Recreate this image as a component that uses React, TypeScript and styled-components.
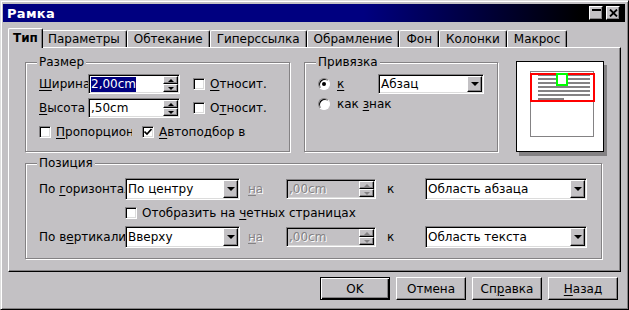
import React from 'react';
import styled, { createGlobalStyle, css } from 'styled-components';

const BG = '#c3c1c4';
const DARK = '#848284';

const Global = createGlobalStyle`
  html, body { margin: 0; padding: 0; background: #fff; }
  body { font-family: "DejaVu Sans", "Liberation Sans", sans-serif; font-size: 12px; color: #000; }
  * { box-sizing: border-box; }
  u { text-underline-offset: 2px; }
`;

const raised = css`
  border: 1px solid;
  border-color: #fff #000 #000 #fff;
  box-shadow: inset -1px -1px ${DARK};
  background: ${BG};
`;

const sunken = css`
  border: 1px solid;
  border-color: ${DARK} #fff #fff ${DARK};
  box-shadow: inset 1px 1px #000, inset -1px -1px #dcdcdc;
`;

const Window = styled.div`
  width: 629px;
  height: 310px;
  background: ${BG};
  border: 1px solid;
  border-color: #dedede #000 #000 #dedede;
  box-shadow: inset 1px 1px #fff, inset -1px -1px ${DARK};
  padding: 3px 3px 3px 2px;
  display: flex;
  flex-direction: column;
`;

const TitleBar = styled.div`
  height: 18px;
  flex: none;
  background: linear-gradient(to right, #000080 0%, #000080 58%, #000 93%);
  display: flex;
  align-items: center;
  padding: 0 5px 0 4px;
`;

const Title = styled.div`
  flex: 1;
  color: #fff;
  font-weight: bold;
  font-size: 13px;
  letter-spacing: 0.3px;
`;

const TitleBtn = styled.div`
  width: 14px;
  height: 14px;
  ${raised};
  display: flex;
  align-items: center;
  justify-content: center;
  & + & { margin-left: 3px; }
`;

const TabBar = styled.div`
  margin: 6px 0 0 5px;
  height: 19px;
  padding-left: 2px;
  display: flex;
  align-items: flex-end;
  flex: none;
`;

const Tab = styled.div<{ $active?: boolean }>`
  height: 17px;
  padding: 0 6px 0 6px;
  display: flex;
  align-items: center;
  white-space: nowrap;
  border-top: 1px solid #fff;
  border-left: 1px solid #fff;
  border-right: 1px solid #000;
  box-shadow: inset -1px 0 ${DARK};
  border-radius: 2px 2px 0 0;
  background: ${BG};
  ${(p) =>
    p.$active &&
    css`
      height: 20px;
      margin: 0 -2px -1px;
      padding: 0 4px 1px 4px;
      font-weight: bold;
      position: relative;
      z-index: 1;
    `}
`;

const Panel = styled.div`
  margin: 0 4px 0 5px;
  height: 225px;
  flex: none;
  border: 1px solid;
  border-color: #fff #000 #000 #fff;
  box-shadow: inset -1px -1px ${DARK};
  padding: 13px 0 0 16px;
`;

const TopRow = styled.div`
  display: flex;
  align-items: flex-start;
  height: 91px;
`;

const Group = styled.div<{ $w: number; $h: number; $ml?: number; $mt?: number; $pt: number }>`
  position: relative;
  width: ${(p) => p.$w}px;
  height: ${(p) => p.$h}px;
  margin-left: ${(p) => p.$ml ?? 0}px;
  margin-top: ${(p) => p.$mt ?? 0}px;
  border: 1px solid ${DARK};
  box-shadow: inset 1px 1px #fff, 1px 1px #fff;
  padding: ${(p) => p.$pt}px 0 0 13px;
  display: flex;
  flex-direction: column;
`;

const Caption = styled.span`
  position: absolute;
  top: -8px;
  left: 11px;
  padding: 0 2px;
  line-height: 14px;
  background: ${BG};
`;

const Row = styled.div<{ $h?: number; $gap?: number; $pl?: number }>`
  display: flex;
  align-items: center;
  height: ${(p) => p.$h ?? 20}px;
  margin-bottom: ${(p) => p.$gap ?? 0}px;
  padding-left: ${(p) => p.$pl ?? 0}px;
`;

const Label = styled.div<{ $w: number; $ml?: number; $disabled?: boolean }>`
  width: ${(p) => p.$w}px;
  margin-left: ${(p) => p.$ml ?? 0}px;
  flex: none;
  white-space: nowrap;
  overflow: hidden;
  ${(p) =>
    p.$disabled &&
    css`
      color: ${DARK};
      text-shadow: 1px 1px #fff;
    `}
`;

const Field = styled.div<{ $w: number; $h?: number; $disabled?: boolean }>`
  width: ${(p) => p.$w}px;
  height: ${(p) => p.$h ?? 20}px;
  flex: none;
  ${sunken};
  background: ${(p) => (p.$disabled ? BG : '#fff')};
  display: flex;
  align-items: stretch;
  padding: 1px 1px 1px 1px;
`;

const FieldText = styled.div<{ $disabled?: boolean }>`
  flex: 1;
  display: flex;
  align-items: center;
  padding-left: 1px;
  white-space: nowrap;
  overflow: hidden;
  ${(p) =>
    p.$disabled &&
    css`
      color: ${DARK};
      text-shadow: 1px 1px #fff;
    `}
`;

const Selected = styled.span`
  background: #000080;
  color: #fff;
  line-height: 15px;
`;

const SpinCol = styled.div`
  width: 15px;
  display: flex;
  flex-direction: column;
  justify-content: center;
`;

const SpinBtn = styled.div`
  height: 8px;
  ${raised};
  display: flex;
  align-items: center;
  justify-content: center;
`;

const ArrowUp = styled.div<{ $disabled?: boolean }>`
  width: 0;
  height: 0;
  border-left: 3px solid transparent;
  border-right: 3px solid transparent;
  border-bottom: 3px solid ${(p) => (p.$disabled ? DARK : '#000')};
`;

const ArrowDown = styled.div<{ $disabled?: boolean; $big?: boolean }>`
  width: 0;
  height: 0;
  border-left: ${(p) => (p.$big ? 4 : 3)}px solid transparent;
  border-right: ${(p) => (p.$big ? 4 : 3)}px solid transparent;
  border-top: ${(p) => (p.$big ? 4 : 3)}px solid ${(p) => (p.$disabled ? DARK : '#000')};
`;

const DropBtn = styled.div`
  width: 15px;
  ${raised};
  display: flex;
  align-items: center;
  justify-content: center;
`;

const CheckItem = styled.div<{ $w?: number; $ml?: number }>`
  display: flex;
  align-items: center;
  gap: 5px;
  ${(p) => p.$w && css`width: ${p.$w}px;`}
  margin-left: ${(p) => p.$ml ?? 0}px;
  flex: none;
  white-space: nowrap;
  overflow: hidden;
`;

const Box = styled.div`
  width: 12px;
  height: 12px;
  flex: none;
  ${sunken};
  background: #fff;
  display: flex;
  align-items: center;
  justify-content: center;
`;

const RadioItem = styled.div<{ $w?: number }>`
  display: flex;
  align-items: center;
  gap: 7px;
  ${(p) => p.$w && css`width: ${p.$w}px;`}
  flex: none;
  white-space: nowrap;
`;

const Radio = styled.div`
  width: 12px;
  height: 12px;
  flex: none;
  border-radius: 50%;
  border: 1px solid;
  border-color: ${DARK} #fff #fff ${DARK};
  box-shadow: inset 1px 1px #000;
  background: #fff;
  display: flex;
  align-items: center;
  justify-content: center;
`;

const Dot = styled.div`
  width: 4px;
  height: 4px;
  border-radius: 50%;
  background: #000;
`;

const PreviewWrap = styled.div`
  margin-left: 18px;
  flex: none;
  line-height: 0;
`;

const ButtonRow = styled.div`
  display: flex;
  justify-content: flex-end;
  gap: 6px;
  margin: 5px 7px 0 0;
`;

const Button = styled.div<{ $default?: boolean }>`
  width: 70px;
  height: 23px;
  display: flex;
  align-items: center;
  justify-content: center;
  ${raised};
  ${(p) =>
    p.$default &&
    css`
      border-color: #000;
      box-shadow: inset 1px 1px #fff, inset -1px -1px #000, inset -2px -2px ${DARK};
    `}
`;

const SpinField: React.FC<{ w: number; disabled?: boolean; children: React.ReactNode }> = ({ w, disabled, children }) => (
  <Field $w={w} $disabled={disabled}>
    <FieldText $disabled={disabled}>{children}</FieldText>
    <SpinCol>
      <SpinBtn>
        <ArrowUp $disabled={disabled} />
      </SpinBtn>
      <SpinBtn>
        <ArrowDown $disabled={disabled} />
      </SpinBtn>
    </SpinCol>
  </Field>
);

const Combo: React.FC<{ w: number; h?: number; children: React.ReactNode }> = ({ w, h, children }) => (
  <Field $w={w} $h={h}>
    <FieldText>{children}</FieldText>
    <DropBtn>
      <ArrowDown $big />
    </DropBtn>
  </Field>
);

const Check: React.FC<{ checked?: boolean }> = ({ checked }) => (
  <Box>
    {checked && (
      <svg width="8" height="8" viewBox="0 0 8 8">
        <path d="M0.5 3.5 L3 6 L7.5 1" stroke="#000" strokeWidth="1.6" fill="none" />
      </svg>
    )}
  </Box>
);

const Preview = () => (
  <svg width="92" height="95" viewBox="0 0 92 95" shapeRendering="crispEdges">
    <rect x="3" y="4" width="88" height="91" fill="#848284" />
    <rect x="0.5" y="0.5" width="87" height="90" fill="#fff" stroke="#000" />
    <rect x="14.5" y="10.5" width="63" height="65" fill="none" stroke="#848284" />
    {[13, 17, 21, 25, 29, 33].map((y) => (
      <rect key={y} x="22" y={y} width="52" height="2" fill="#848284" />
    ))}
    <rect x="22" y="37" width="26" height="2" fill="#848284" />
    <rect x="14.5" y="12.5" width="63" height="27" fill="none" stroke="#ff0000" strokeWidth="2" />
    <rect x="41" y="12.5" width="10" height="11" fill="#fff" stroke="#00ff00" strokeWidth="2" />
  </svg>
);

export default function App() {
  return (
    <>
      <Global />
      <Window>
        <TitleBar>
          <Title>Рамка</Title>
          <TitleBtn>
            <svg width="9" height="8" viewBox="0 0 9 8" shapeRendering="crispEdges">
              <rect x="0" y="0" width="9" height="2" fill="#000" />
            </svg>
          </TitleBtn>
          <TitleBtn>
            <svg width="9" height="8" viewBox="0 0 9 8">
              <path d="M1 0.5 L8 7.5 M8 0.5 L1 7.5" stroke="#000" strokeWidth="1.8" />
            </svg>
          </TitleBtn>
        </TitleBar>

        <TabBar>
          <Tab $active>Тип</Tab>
          <Tab>Параметры</Tab>
          <Tab>Обтекание</Tab>
          <Tab>Гиперссылка</Tab>
          <Tab>Обрамление</Tab>
          <Tab>Фон</Tab>
          <Tab>Колонки</Tab>
          <Tab>Макрос</Tab>
        </TabBar>

        <Panel>
          <TopRow>
            <Group $w={265} $h={90} $mt={1} $pt={11}>
              <Caption>Размер</Caption>
              <Row $gap={4}>
                <Label $w={49}>
                  <u>Ш</u>ирина
                </Label>
                <Field $w={92}>
                  <FieldText>
                    <Selected>2,00cm</Selected>
                  </FieldText>
                  <SpinCol>
                    <SpinBtn>
                      <ArrowUp />
                    </SpinBtn>
                    <SpinBtn>
                      <ArrowDown />
                    </SpinBtn>
                  </SpinCol>
                </Field>
                <CheckItem $ml={13}>
                  <Check />
                  <span>
                    <u>О</u>тносит.
                  </span>
                </CheckItem>
              </Row>
              <Row $gap={4}>
                <Label $w={49}>
                  <u>В</u>ысота
                </Label>
                <SpinField w={92}>,50cm</SpinField>
                <CheckItem $ml={13}>
                  <Check />
                  <span>
                    О<u>т</u>носит.
                  </span>
                </CheckItem>
              </Row>
              <Row>
                <CheckItem $w={93}>
                  <Check />
                  <span>
                    <u>П</u>ропорционально
                  </span>
                </CheckItem>
                <CheckItem $w={104} $ml={10}>
                  <Check checked />
                  <span>
                    <u>А</u>втоподбор высоты
                  </span>
                </CheckItem>
              </Row>
            </Group>

            <Group $w={194} $h={90} $mt={1} $ml={14} $pt={11}>
              <Caption>Привязка</Caption>
              <Row>
                <RadioItem $w={60}>
                  <Radio>
                    <Dot />
                  </Radio>
                  <u>к</u>
                </RadioItem>
                <Combo w={106}>Абзац</Combo>
              </Row>
              <Row>
                <RadioItem>
                  <Radio />
                  <span>
                    как <u>з</u>нак
                  </span>
                </RadioItem>
              </Row>
            </Group>

            <PreviewWrap>
              <Preview />
            </PreviewWrap>
          </TopRow>

          <Group $w={577} $h={96} $mt={11} $pt={14}>
            <Caption>Позиция</Caption>
            <Row $h={22} $gap={2}>
              <Label $w={86}>
                По <u>г</u>оризонтали
              </Label>
              <Combo w={115} h={22}>
                По центру
              </Combo>
              <Label $w={38} $ml={8} $disabled>
                <u>н</u>а
              </Label>
              <SpinField w={90} disabled>
                ,00cm
              </SpinField>
              <Label $w={38} $ml={11}>
                к
              </Label>
              <Combo w={162} h={22}>
                Область абзаца
              </Combo>
            </Row>
            <Row $h={22} $gap={2} $pl={86}>
              <CheckItem>
                <Check />
                <span>
                  Отобразить на <u>ч</u>етных страницах
                </span>
              </CheckItem>
            </Row>
            <Row $h={22}>
              <Label $w={86}>
                По в<u>е</u>ртикали
              </Label>
              <Combo w={115} h={22}>
                Вверху
              </Combo>
              <Label $w={38} $ml={8} $disabled>
                <u>н</u>а
              </Label>
              <SpinField w={90} disabled>
                ,00cm
              </SpinField>
              <Label $w={38} $ml={11}>
                к
              </Label>
              <Combo w={162} h={22}>
                Область текста
              </Combo>
            </Row>
          </Group>
        </Panel>

        <ButtonRow>
          <Button $default>OK</Button>
          <Button>Отмена</Button>
          <Button>
            Сп<u>р</u>авка
          </Button>
          <Button>
            <u>Н</u>азад
          </Button>
        </ButtonRow>
      </Window>
    </>
  );
}
